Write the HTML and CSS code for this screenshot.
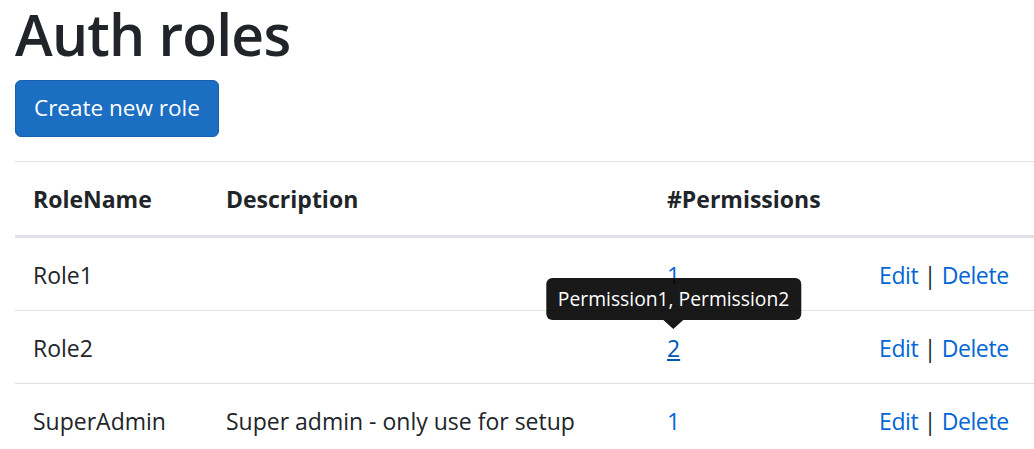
FILE: index.html
```html
<!DOCTYPE html>
<html lang="en">
<head>
<meta charset="utf-8">
<title>Auth roles</title>
<link rel="stylesheet" href="styles.css">
</head>
<body>
<main class="page">
  <h1 class="title">Auth roles</h1>
  <p class="actions"><a class="btn btn-primary" href="#">Create new role</a></p>
  <table class="table">
    <thead>
      <tr>
        <th class="col-name">RoleName</th>
        <th class="col-desc">Description</th>
        <th class="col-perm">#Permissions</th>
        <th class="col-act"></th>
      </tr>
    </thead>
    <tbody>
      <tr>
        <td>Role1</td>
        <td></td>
        <td><a class="link" href="#">1</a></td>
        <td class="row-actions"><a class="link" href="#">Edit</a> | <a class="link" href="#">Delete</a></td>
      </tr>
      <tr>
        <td>Role2</td>
        <td></td>
        <td>
          <span class="tip-anchor">
            <a class="link link-hover" href="#">2</a>
            <span class="tooltip" role="tooltip">Permission1, Permission2</span>
          </span>
        </td>
        <td class="row-actions"><a class="link" href="#">Edit</a> | <a class="link" href="#">Delete</a></td>
      </tr>
      <tr>
        <td>SuperAdmin</td>
        <td>Super admin - only use for setup</td>
        <td><a class="link" href="#">1</a></td>
        <td class="row-actions"><a class="link" href="#">Edit</a> | <a class="link" href="#">Delete</a></td>
      </tr>
    </tbody>
  </table>
</main>
</body>
</html>
```

FILE: styles.css
```css
html, body {
  margin: 0;
  padding: 0;
  overflow: hidden;
  background: #fff;
}

body {
  font-family: "Open Sans", "Noto Sans", "Liberation Sans", sans-serif;
  font-size: 23px;
  line-height: 1.5;
  color: #212529;
}

.page {
  padding: 0 0 0 15px;
  width: 1120px;
}

.title {
  font-size: 57px;
  font-weight: 600;
  line-height: 68px;
  margin: 0 0 12px;
  letter-spacing: -0.8px;
}

.actions {
  margin: 0 0 24px;
}

.btn {
  display: inline-block;
  box-sizing: border-box;
  height: 57px;
  padding: 9px 18px;
  border: 1.5px solid #1861ac;
  border-radius: 6px;
  font-size: 22.5px;
  line-height: 36px;
  text-decoration: none;
}

.btn-primary {
  background: #1b6ec2;
  color: #fff;
}

.table {
  width: 1105px;
  border-collapse: collapse;
  table-layout: fixed;
}

.table th,
.table td {
  padding: 19px 18px 17px;
  text-align: left;
  vertical-align: top;
  border-top: 1px solid #dee2e6;
  line-height: 36px;
  white-space: nowrap;
}

.table th {
  padding-bottom: 18px;
  font-weight: 700;
  border-bottom: 3px solid #dee2e6;
}

.col-name { width: 157px; }
.col-desc { width: 405px; }
.col-perm { width: 176px; }

.row-actions {
  letter-spacing: -0.4px;
}

.link {
  color: #0366d6;
  text-decoration: none;
}

.link-hover {
  text-decoration: underline;
  color: #0056b3;
}

.tip-anchor {
  position: relative;
  display: inline-block;
}

.tooltip {
  position: absolute;
  bottom: calc(100% + 10px);
  left: 50%;
  transform: translateX(-50%);
  padding: 6px 12px;
  background: rgba(0, 0, 0, 0.9);
  color: #fff;
  font-size: 19.3px;
  line-height: 30px;
  border-radius: 6px;
  white-space: nowrap;
}

.tooltip::after {
  content: "";
  position: absolute;
  top: 100%;
  left: 50%;
  margin-left: -10px;
  border-width: 9px 10px 0;
  border-style: solid;
  border-color: rgba(0, 0, 0, 0.9) transparent transparent;
}
```
